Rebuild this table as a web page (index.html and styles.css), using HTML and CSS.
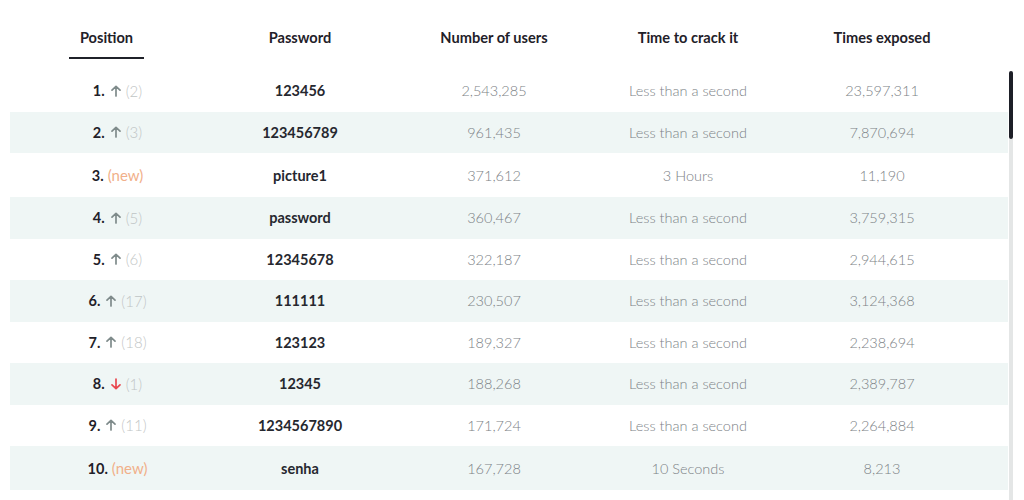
FILE: index.html
```html
<!DOCTYPE html>
<html>
<head>
<meta charset="utf-8">
<link rel="stylesheet" href="styles.css">
</head>
<body>
<div class="page">
  <div class="table">
    <div class="row head">
      <div class="cell"><span class="tab active">Position</span></div>
      <div class="cell"><span class="tab">Password</span></div>
      <div class="cell"><span class="tab">Number of users</span></div>
      <div class="cell"><span class="tab">Time to crack it</span></div>
      <div class="cell"><span class="tab">Times exposed</span></div>
    </div>

    <div class="row">
      <div class="cell pos"><span class="num">1.</span><svg class="arr up" viewBox="0 0 10 12"><path d="M5 11V1.5M1 5.2L5 1.3 9 5.2"/></svg><span class="prev">(2)</span></div>
      <div class="cell pw">123456</div>
      <div class="cell val">2,543,285</div>
      <div class="cell val">Less than a second</div>
      <div class="cell val">23,597,311</div>
    </div>
    <div class="row alt">
      <div class="cell pos"><span class="num">2.</span><svg class="arr up" viewBox="0 0 10 12"><path d="M5 11V1.5M1 5.2L5 1.3 9 5.2"/></svg><span class="prev">(3)</span></div>
      <div class="cell pw">123456789</div>
      <div class="cell val">961,435</div>
      <div class="cell val">Less than a second</div>
      <div class="cell val">7,870,694</div>
    </div>
    <div class="row tall">
      <div class="cell pos"><span class="num">3.</span><span class="new">(new)</span></div>
      <div class="cell pw">picture1</div>
      <div class="cell val">371,612</div>
      <div class="cell val">3 Hours</div>
      <div class="cell val">11,190</div>
    </div>
    <div class="row alt">
      <div class="cell pos"><span class="num">4.</span><svg class="arr up" viewBox="0 0 10 12"><path d="M5 11V1.5M1 5.2L5 1.3 9 5.2"/></svg><span class="prev">(5)</span></div>
      <div class="cell pw">password</div>
      <div class="cell val">360,467</div>
      <div class="cell val">Less than a second</div>
      <div class="cell val">3,759,315</div>
    </div>
    <div class="row">
      <div class="cell pos"><span class="num">5.</span><svg class="arr up" viewBox="0 0 10 12"><path d="M5 11V1.5M1 5.2L5 1.3 9 5.2"/></svg><span class="prev">(6)</span></div>
      <div class="cell pw">12345678</div>
      <div class="cell val">322,187</div>
      <div class="cell val">Less than a second</div>
      <div class="cell val">2,944,615</div>
    </div>
    <div class="row alt">
      <div class="cell pos"><span class="num">6.</span><svg class="arr up" viewBox="0 0 10 12"><path d="M5 11V1.5M1 5.2L5 1.3 9 5.2"/></svg><span class="prev">(17)</span></div>
      <div class="cell pw">111111</div>
      <div class="cell val">230,507</div>
      <div class="cell val">Less than a second</div>
      <div class="cell val">3,124,368</div>
    </div>
    <div class="row">
      <div class="cell pos"><span class="num">7.</span><svg class="arr up" viewBox="0 0 10 12"><path d="M5 11V1.5M1 5.2L5 1.3 9 5.2"/></svg><span class="prev">(18)</span></div>
      <div class="cell pw">123123</div>
      <div class="cell val">189,327</div>
      <div class="cell val">Less than a second</div>
      <div class="cell val">2,238,694</div>
    </div>
    <div class="row alt">
      <div class="cell pos"><span class="num">8.</span><svg class="arr down" viewBox="0 0 10 12"><path d="M5 1v9.5M1 6.8L5 10.7 9 6.8"/></svg><span class="prev">(1)</span></div>
      <div class="cell pw">12345</div>
      <div class="cell val">188,268</div>
      <div class="cell val">Less than a second</div>
      <div class="cell val">2,389,787</div>
    </div>
    <div class="row">
      <div class="cell pos"><span class="num">9.</span><svg class="arr up" viewBox="0 0 10 12"><path d="M5 11V1.5M1 5.2L5 1.3 9 5.2"/></svg><span class="prev">(11)</span></div>
      <div class="cell pw">1234567890</div>
      <div class="cell val">171,724</div>
      <div class="cell val">Less than a second</div>
      <div class="cell val">2,264,884</div>
    </div>
    <div class="row alt tall">
      <div class="cell pos"><span class="num">10.</span><span class="new">(new)</span></div>
      <div class="cell pw">senha</div>
      <div class="cell val">167,728</div>
      <div class="cell val">10 Seconds</div>
      <div class="cell val">8,213</div>
    </div>
  </div>
  <div class="scrollbar"><div class="thumb"></div><div class="track"></div></div>
</div>
</body>
</html>
```

FILE: styles.css
```css
html, body {
  margin: 0;
  padding: 0;
  background: #ffffff;
}
body {
  font-family: "Lato", "Liberation Sans", sans-serif;
  color: #1f2129;
  width: 1024px;
  height: 500px;
  overflow: hidden;
}
.page {
  display: flex;
  padding-left: 10px;
  gap: 1px;
}
.table {
  width: 998px;
  display: flex;
  flex-direction: column;
}
.row {
  display: grid;
  grid-template-columns: 193px 194px 194px 194px 194px;
  align-items: center;
  height: 41.5px;
}
.row.tall {
  height: 44px;
}
.row.alt {
  background: #eff6f5;
}
.row.head {
  height: 70px;
  align-items: start;
}
.cell {
  display: flex;
  justify-content: center;
  align-items: center;
  white-space: nowrap;
}
.head .cell {
  padding-top: 29px;
}
.tab {
  display: inline-block;
  font-size: 14.6px;
  font-weight: 700;
  color: #1f2129;
  line-height: 17px;
  padding: 0 11px 11px;
  border-bottom: 2px solid transparent;
}
.tab.active {
  border-bottom-color: #1f2129;
}
.pos {
  padding-left: 22px;
  font-size: 14.5px;
}
.num {
  font-weight: 700;
  color: #1f2129;
}
.arr {
  width: 10px;
  height: 12px;
  margin: 0 5px 0 6px;
  fill: none;
  stroke-width: 1.7;
  stroke-linecap: round;
  stroke-linejoin: round;
}
.arr.up { stroke: #7f8b8b; }
.arr.down { stroke: #e8484f; }
.prev {
  color: #bfc5c5;
  font-weight: 300;
  font-size: 15px;
}
.new {
  margin-left: 4px;
  color: #f1b08a;
  font-weight: 400;
  font-size: 15px;
}
.pw {
  font-size: 14.5px;
  font-weight: 700;
  color: #26282f;
}
.val {
  font-size: 14.5px;
  font-weight: 300;
  color: #7c8286;
}
.scrollbar {
  width: 4px;
  display: flex;
  flex-direction: column;
  padding-top: 71px;
}
.thumb {
  height: 68px;
  background: #1d1f27;
  border-radius: 2px;
}
.track {
  height: 361px;
  background: #e4e6e6;
}
```
